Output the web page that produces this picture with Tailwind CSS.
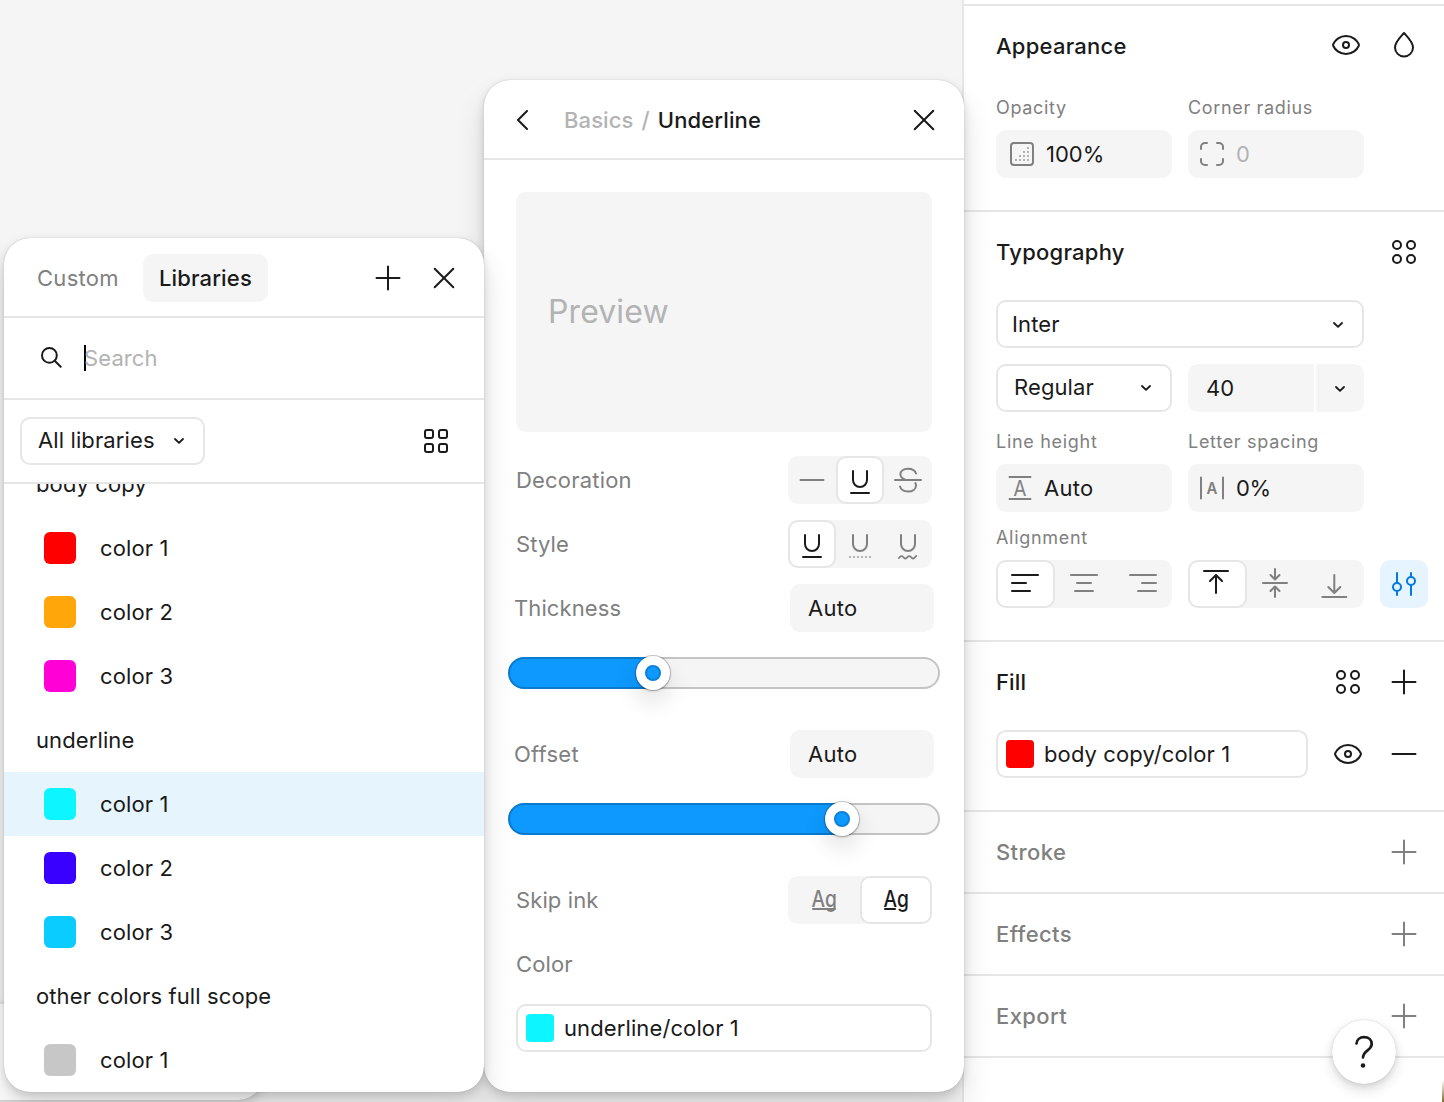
<!DOCTYPE html>
<html lang="en">
<head>
    <meta charset="UTF-8">
    <meta name="viewport" content="width=device-width, initial-scale=1.0">
    <title>Type settings</title>
    <script src="https://cdn.jsdelivr.net/npm/@tailwindcss/browser@4"></script>
    <style>
        body {
            font-family: 'Inter', sans-serif;
        }
        /* Shared outline style for the icons */
        svg {
            fill: none;
            stroke: currentColor;
            stroke-width: 2;
            stroke-linecap: round;
            stroke-linejoin: round;
            flex-shrink: 0;
        }
        svg text {
            fill: currentColor;
            stroke: none;
        }
    </style>
</head>
<body class="relative flex w-[1444px] h-[1102px] overflow-hidden bg-[#f5f5f5] text-[22px] leading-8 tracking-[0.11px] text-[#1a1a1a]">

<!-- Icon sprite -->
<svg class="hidden">
    <symbol id="plus" viewBox="0 0 48 48"><path d="M24 12.5v23M12.5 24h23"/></symbol>
    <symbol id="minus" viewBox="0 0 48 48"><path d="M12.5 24h23"/></symbol>
    <symbol id="close" viewBox="0 0 48 48"><path d="M14.700 14.700l18.600 18.600M33.300 14.700L14.700 33.300"/></symbol>
    <symbol id="chevron" viewBox="0 0 16 16"><path stroke-width="1.800" d="M4 7l4 3.900L12 7"/></symbol>
    <symbol id="eye" viewBox="0 0 48 48"><path d="M24 15c6.500 0 11 4.300 12.700 8a2.300 2.300 0 0 1 0 2C35 28.700 30.500 33 24 33s-11-4.300-12.700-8a2.300 2.300 0 0 1 0-2C13 19.300 17.500 15 24 15z"/><circle cx="24" cy="24" r="3"/></symbol>
    <symbol id="styles" viewBox="0 0 48 48"><circle cx="17" cy="17" r="4"/><circle cx="31" cy="17" r="4"/><circle cx="17" cy="31" r="4"/><circle cx="31" cy="31" r="4"/></symbol>
    <symbol id="underline" viewBox="0 0 48 48"><path d="M17 15v9a7 7 0 0 0 14 0v-9"/></symbol>
</svg>

<!-- Canvas -->
<main class="flex-1"></main>

<!-- Properties sidebar -->
<aside class="w-[482px] border-l-2 border-[#e6e6e6] bg-white">
    <div class="h-1.5 border-b-2 border-[#e6e6e6]"></div>

    <section class="border-b-2 border-[#e6e6e6] pl-8 pr-4 pb-8">
        <div class="flex h-20 items-center">
            <h2 class="flex-1 font-medium tracking-[0.25px]">Appearance</h2>
            <svg class="size-12 mr-2.5 -mt-0.5"><use href="#eye"/></svg>
            <svg class="size-12" viewBox="0 0 48 48"><path d="M24 11c-3.500 4-9 9-9 14.500a9 9 0 0 0 18 0C33 20 27.500 15 24 11z"/></svg>
        </div>
        <div class="grid w-[368px] grid-cols-2 gap-x-4">
            <div class="flex h-11 items-center text-[18px] tracking-[0.66px] text-[#808080]">Opacity</div>
            <div class="flex h-11 items-center text-[18px] tracking-[0.66px] text-[#808080]">Corner radius</div>
            <div class="flex h-12 items-center rounded-[10px] bg-[#f5f5f5] pl-3.5">
                <svg class="size-6 text-[#808080]" viewBox="0 0 24 24">
                    <rect x="1" y="1" width="22" height="22" rx="3"/>
                    <g stroke="none" fill="#b3b3b3">
                        <rect x="17" y="5" width="2" height="2"/>
                        <rect x="13" y="9" width="2" height="2"/><rect x="17" y="9" width="2" height="2"/>
                        <rect x="9" y="13" width="2" height="2"/><rect x="13" y="13" width="2" height="2"/><rect x="17" y="13" width="2" height="2"/>
                        <rect x="5" y="17" width="2" height="2"/><rect x="9" y="17" width="2" height="2"/><rect x="13" y="17" width="2" height="2"/><rect x="17" y="17" width="2" height="2"/>
                    </g>
                </svg>
                <span class="ml-3 tracking-normal">100%</span>
            </div>
            <div class="flex h-12 items-center rounded-[10px] bg-[#f5f5f5] pl-3">
                <svg class="size-6 text-[#808080]" viewBox="0 0 24 24"><path d="M1 7V5a4 4 0 0 1 4-4h2M17 1h2a4 4 0 0 1 4 4v2M23 17v2a4 4 0 0 1-4 4h-2M7 23H5a4 4 0 0 1-4-4v-2"/></svg>
                <span class="ml-3 text-[#b3b3b3]">0</span>
            </div>
        </div>
    </section>

    <section class="border-b-2 border-[#e6e6e6] pl-8 pr-4 pb-8">
        <div class="flex h-20 items-center">
            <h2 class="flex-1 font-medium tracking-[0.25px]">Typography</h2>
            <svg class="size-12"><use href="#styles"/></svg>
        </div>
        <div class="mt-2 flex h-12 w-[368px] items-center justify-between rounded-[10px] border-2 border-[#e6e6e6] pl-3.5 pr-4">
            Inter
            <svg class="size-4"><use href="#chevron"/></svg>
        </div>
        <div class="mt-4 grid w-[368px] grid-cols-2 gap-x-4">
            <div class="flex h-12 items-center justify-between rounded-[10px] border-2 border-[#e6e6e6] pl-4 pr-4 pb-0.5">
                Regular
                <svg class="size-4"><use href="#chevron"/></svg>
            </div>
            <div class="flex h-12 gap-0.5 overflow-hidden rounded-[10px]">
                <div class="flex flex-1 items-center bg-[#f5f5f5] pl-[18px]">40</div>
                <div class="flex w-12 items-center justify-center bg-[#f5f5f5]"><svg class="size-4"><use href="#chevron"/></svg></div>
            </div>
            <div class="mt-2 flex h-11 items-center text-[18px] tracking-[0.7px] text-[#808080]">Line height</div>
            <div class="mt-2 flex h-11 items-center text-[18px] tracking-[0.7px] text-[#808080]">Letter spacing</div>
            <div class="flex h-12 items-center rounded-[10px] bg-[#f5f5f5] pl-3">
                <svg class="size-6 text-[#808080]" viewBox="0 0 24 24"><path d="M1.500 1h21M1.500 23h21"/><text x="12" y="20" font-size="22" text-anchor="middle" textLength="13" lengthAdjust="spacingAndGlyphs">A</text></svg>
                <span class="ml-3 tracking-[0.25px]">Auto</span>
            </div>
            <div class="flex h-12 items-center rounded-[10px] bg-[#f5f5f5] pl-3">
                <svg class="size-6 text-[#808080]" viewBox="0 0 24 24"><path d="M1 1.500v21M23 1.500v21"/><text x="12" y="18" font-size="16.500" font-weight="600" text-anchor="middle" textLength="11" lengthAdjust="spacingAndGlyphs">A</text></svg>
                <span class="ml-3 tracking-[-0.5px]">0%</span>
            </div>
        </div>
        <div class="mt-1 flex h-11 items-center text-[18px] tracking-[0.7px] text-[#808080]">Alignment</div>
        <div class="flex gap-4 text-[#808080]">
            <div class="grid h-12 w-44 grid-cols-3 grid-rows-[48px] rounded-[10px] bg-[#f5f5f5]">
                <div class="flex items-center justify-center rounded-[10px] border-2 border-[#e6e6e6] bg-white text-[#1a1a1a]">
                    <svg class="size-12" viewBox="0 0 48 48"><path d="M11 15h26M11 23h14M11 31h18"/></svg>
                </div>
                <div class="flex items-center justify-center">
                    <svg class="size-12" viewBox="0 0 48 48"><path d="M11 15h26M17 23h14M15 31h18"/></svg>
                </div>
                <div class="flex items-center justify-center">
                    <svg class="size-12" viewBox="0 0 48 48"><path d="M11 15h26M23 23h14M19 31h18"/></svg>
                </div>
            </div>
            <div class="grid h-12 w-44 grid-cols-3 grid-rows-[48px] rounded-[10px] bg-[#f5f5f5]">
                <div class="flex items-center justify-center rounded-[10px] border-2 border-[#e6e6e6] bg-white text-[#1a1a1a]">
                    <svg class="size-12" viewBox="0 0 48 48"><path d="M11 11h24M23 33V15M17 21l6-6 6 6"/></svg>
                </div>
                <div class="flex items-center justify-center">
                    <svg class="size-12" viewBox="0 0 48 48"><path d="M11 23h24M23 9v10M18.500 15l4.500 4.500 4.500-4.500M23 37V27M18.500 31l4.500-4.500 4.500 4.500"/></svg>
                </div>
                <div class="flex items-center justify-center">
                    <svg class="size-12" viewBox="0 0 48 48"><path d="M11.300 37h24M23.300 15v18M17.300 27l6 6 6-6"/></svg>
                </div>
            </div>
            <div class="flex size-12 items-center justify-center rounded-[10px] bg-[#e5f4ff] text-[#007be5]">
                <svg class="size-12" viewBox="0 0 48 48"><path d="M17 13v9.500M17 31.500V35M31 13v4M31 25.500V35"/><circle cx="17" cy="27" r="4"/><circle cx="31" cy="21" r="4"/></svg>
            </div>
        </div>
    </section>

    <section class="border-b-2 border-[#e6e6e6] pl-8 pr-4 pb-8">
        <div class="flex h-20 items-center gap-2">
            <h2 class="flex-1 font-medium">Fill</h2>
            <svg class="size-12"><use href="#styles"/></svg>
            <svg class="size-12"><use href="#plus"/></svg>
        </div>
        <div class="mt-2 flex items-center gap-2">
            <div class="mr-2 flex h-12 flex-1 items-center rounded-[10px] border-2 border-[#e6e6e6] pl-2">
                <span class="size-7 rounded bg-[#ff0000]"></span>
                <span class="ml-2.5">body copy/color 1</span>
            </div>
            <svg class="size-12"><use href="#eye"/></svg>
            <svg class="size-12"><use href="#minus"/></svg>
        </div>
    </section>

    <section class="flex h-[82px] items-center justify-between border-b-2 border-[#e6e6e6] pl-8 pr-4 text-[#808080]">
        <h2 class="font-medium tracking-[0.4px]">Stroke</h2>
        <svg class="size-12"><use href="#plus"/></svg>
    </section>
    <section class="flex h-[82px] items-center justify-between border-b-2 border-[#e6e6e6] pl-8 pr-4 text-[#808080]">
        <h2 class="font-medium tracking-[0.4px]">Effects</h2>
        <svg class="size-12"><use href="#plus"/></svg>
    </section>
    <section class="flex h-[82px] items-center justify-between border-b-2 border-[#e6e6e6] pl-8 pr-4 text-[#808080]">
        <h2 class="font-medium tracking-[0.4px]">Export</h2>
        <svg class="size-12"><use href="#plus"/></svg>
    </section>
</aside>

<!-- Panel underneath, only its bottom edge shows -->
<div class="absolute -left-10 top-[1002px] h-[98px] w-[304px] rounded-b-[26px] border-t-2 border-[#e6e6e6] bg-white shadow-[0_0_1px_rgba(0,0,0,0.3),0_4px_10px_rgba(0,0,0,0.15)]"></div>

<!-- Underline settings -->
<div class="absolute left-[484px] top-20 h-[1012px] w-[480px] rounded-[26px] bg-white shadow-[0_0_1px_rgba(0,0,0,0.3),0_4px_10px_rgba(0,0,0,0.15),0_20px_32px_rgba(0,0,0,0.12)]">
    <div class="flex h-20 items-center border-b-2 border-[#e6e6e6] pt-0.5 pl-8 pr-4">
        <svg class="h-6 w-3" viewBox="0 0 12 24"><path d="M11 3L2 12l9 9"/></svg>
        <div class="ml-9 flex flex-1 gap-2 font-medium text-[#b3b3b3]">
            <span>Basics</span>
            <span>/</span>
            <span class="text-[#1a1a1a]">Underline</span>
        </div>
        <svg class="size-12"><use href="#close"/></svg>
    </div>
    <div class="flex flex-col px-8 pt-8 text-[#808080]">
        <div class="flex h-60 items-center rounded-[10px] bg-[#f5f5f5] pl-8 text-[32px] tracking-[0.1px] text-[#b3b3b3]">Preview</div>

        <div class="mt-6 flex items-center justify-between">
            <span class="tracking-[0.2px]">Decoration</span>
            <div class="flex h-12 rounded-[10px] bg-[#f5f5f5]">
                <svg class="size-12"><use href="#minus"/></svg>
                <div class="flex size-12 items-center justify-center rounded-[10px] border-2 border-[#e6e6e6] bg-white text-[#1a1a1a]">
                    <svg class="size-12" viewBox="0 0 48 48"><use href="#underline"/><path d="M15 37h18"/></svg>
                </div>
                <svg class="size-12" viewBox="0 0 48 48"><path d="M11 24h26M32 17.500c-1-3.200-4-4.800-8-4.800-4.500 0-7.600 2.300-7.600 5.600 0 2.700 2 4.400 5.200 5.700M16 30.500c1 3.200 4 5 8 5 4.700 0 8-2.400 8-6 0-1-.2-1.800-.6-2.500"/></svg>
            </div>
        </div>

        <div class="mt-4 flex items-center justify-between">
            Style
            <div class="flex h-12 rounded-[10px] bg-[#f5f5f5]">
                <div class="flex size-12 items-center justify-center rounded-[10px] border-2 border-[#e6e6e6] bg-white text-[#1a1a1a]">
                    <svg class="size-12" viewBox="0 0 48 48"><use href="#underline"/><path d="M15 37h18"/></svg>
                </div>
                <svg class="size-12" viewBox="0 0 48 48"><use href="#underline"/><path d="M13 37h22" stroke="#b3b3b3" stroke-linecap="butt" stroke-dasharray="2 2"/></svg>
                <svg class="size-12" viewBox="0 0 48 48"><use href="#underline"/><path stroke-width="1.800" d="M15 38l1.200-1.300a1.800 1.800 0 0 1 2.600 0l1.300 1.200a1.800 1.800 0 0 0 2.500 0l1.300-1.200a1.800 1.800 0 0 1 2.600 0l1.300 1.200a1.800 1.800 0 0 0 2.500 0l2-2"/></svg>
            </div>
        </div>

        <div class="mt-4 -mx-0.5 flex items-center justify-between">
            Thickness
            <div class="flex h-12 w-36 items-center rounded-[10px] bg-[#f5f5f5] pl-[18px] tracking-[0.25px] text-[#1a1a1a]">Auto</div>
        </div>
        <div class="relative mt-[25px] -mx-2 h-8 rounded-full bg-[#f5f5f5]">
            <div class="h-8 rounded-full bg-[#0d99ff]" style="width: 161px"></div>
            <div class="absolute inset-0 rounded-full border-2 border-black/20"></div>
            <div class="absolute -top-px size-[34px] rounded-full border-[9px] border-white bg-[#0d99ff] shadow-[0_0_0_1px_rgba(0,0,0,0.2),0_1px_3px_rgba(0,0,0,0.2),0_12px_24px_rgba(0,0,0,0.12)]" style="left: 128px">
                <div class="size-4 rounded-full border-2 border-black/15"></div>
            </div>
        </div>

        <div class="mt-[41px] -mx-0.5 flex items-center justify-between">
            <span class="tracking-[0.25px]">Offset</span>
            <div class="flex h-12 w-36 items-center rounded-[10px] bg-[#f5f5f5] pl-[18px] tracking-[0.25px] text-[#1a1a1a]">Auto</div>
        </div>
        <div class="relative mt-[25px] -mx-2 h-8 rounded-full bg-[#f5f5f5]">
            <div class="h-8 rounded-full bg-[#0d99ff]" style="width: 350px"></div>
            <div class="absolute inset-0 rounded-full border-2 border-black/20"></div>
            <div class="absolute -top-px size-[34px] rounded-full border-[9px] border-white bg-[#0d99ff] shadow-[0_0_0_1px_rgba(0,0,0,0.2),0_1px_3px_rgba(0,0,0,0.2),0_12px_24px_rgba(0,0,0,0.12)]" style="left: 317px">
                <div class="size-4 rounded-full border-2 border-black/15"></div>
            </div>
        </div>

        <div class="mt-[41px] flex items-center justify-between">
            Skip ink
            <div class="grid h-12 w-36 grid-cols-2 grid-rows-[48px] rounded-[10px] bg-[#f5f5f5]">
                <div class="flex items-center justify-center">
                    <svg class="size-12" viewBox="0 0 48 48"><text x="11.500" y="31" font-size="22.500" font-weight="500" textLength="25.500" lengthAdjust="spacingAndGlyphs">Ag</text><path d="M13 33h22"/></svg>
                </div>
                <div class="flex items-center justify-center rounded-[10px] border-2 border-[#e6e6e6] bg-white text-[#1a1a1a]">
                    <svg class="size-12" viewBox="0 0 48 48"><text x="11.500" y="31" font-size="22.500" font-weight="500" textLength="25.500" lengthAdjust="spacingAndGlyphs">Ag</text><path d="M13 33h10"/></svg>
                </div>
            </div>
        </div>

        <div class="mt-4 flex h-12 items-center">Color</div>
        <div class="mt-4 flex h-12 items-center rounded-[10px] border-2 border-[#e6e6e6] pl-2 text-[#1a1a1a]">
            <span class="size-7 rounded bg-[#0df6ff]"></span>
            <span class="ml-2.5">underline/color 1</span>
        </div>
    </div>
</div>

<!-- Color picker -->
<div class="absolute left-1 top-[238px] h-[854px] w-[480px] overflow-hidden rounded-[26px] bg-white shadow-[0_0_1px_rgba(0,0,0,0.3),0_4px_10px_rgba(0,0,0,0.15),0_20px_32px_rgba(0,0,0,0.12)]">
    <div class="flex h-20 items-center border-b-2 border-[#e6e6e6] pt-0.5 pl-[17px] pr-4">
        <div class="flex h-12 items-center px-4 text-[#808080] tracking-[0.3px]">Custom</div>
        <div class="ml-2 flex h-12 items-center rounded-[10px] bg-[#f5f5f5] px-4 font-medium tracking-[0.15px]">Libraries</div>
        <svg class="ml-auto size-12"><use href="#plus"/></svg>
        <svg class="ml-2 size-12"><use href="#close"/></svg>
    </div>
    <div class="flex h-[82px] items-center border-b-2 border-[#e6e6e6] pl-9">
        <svg class="size-6" viewBox="0 0 24 24"><circle cx="9.400" cy="9.400" r="7.400"/><path d="M14.700 14.700l6 6"/></svg>
        <span class="ml-5 h-[26px] w-0.5 bg-black"></span>
        <span class="-ml-0.5 text-[#b3b3b3]">Search</span>
    </div>
    <div class="flex h-[84px] items-center justify-between border-b-2 border-[#e6e6e6] pl-4 pr-6">
        <div class="flex h-12 w-[185px] items-center justify-between rounded-[10px] border-2 border-[#e6e6e6] px-4 pb-0.5">
            All libraries
            <svg class="size-4"><use href="#chevron"/></svg>
        </div>
        <svg class="size-12" viewBox="0 0 48 48"><rect x="13" y="13" width="8" height="8" rx="2"/><rect x="27" y="13" width="8" height="8" rx="2"/><rect x="13" y="27" width="8" height="8" rx="2"/><rect x="27" y="27" width="8" height="8" rx="2"/></svg>
    </div>
    <div class="h-[608px] overflow-hidden">
        <div class="-mt-8 flex h-16 items-center px-8">body copy</div>
        <div class="flex h-16 items-center gap-6 px-10"><span class="size-8 rounded-md bg-[#ff0000]"></span>color 1</div>
        <div class="flex h-16 items-center gap-6 px-10"><span class="size-8 rounded-md bg-[#ffa60a]"></span>color 2</div>
        <div class="flex h-16 items-center gap-6 px-10"><span class="size-8 rounded-md bg-[#ff00d6]"></span>color 3</div>
        <div class="flex h-16 items-center px-8">underline</div>
        <div class="flex h-16 items-center gap-6 bg-[#e5f4fd] px-10"><span class="size-8 rounded-md bg-[#0df6ff]"></span>color 1</div>
        <div class="flex h-16 items-center gap-6 px-10"><span class="size-8 rounded-md bg-[#3a00ff]"></span>color 2</div>
        <div class="flex h-16 items-center gap-6 px-10"><span class="size-8 rounded-md bg-[#0accff]"></span>color 3</div>
        <div class="flex h-16 items-center px-8">other colors full scope</div>
        <div class="flex h-16 items-center gap-6 px-10"><span class="size-8 rounded-md bg-[#c7c7c7]"></span>color 1</div>
    </div>
</div>

<!-- Help button -->
<div class="absolute bottom-[18px] right-12 size-16 rounded-full bg-white shadow-[0_0_1px_rgba(0,0,0,0.2),0_2px_6px_rgba(0,0,0,0.1),0_6px_14px_rgba(0,0,0,0.12)]">
    <svg class="size-16" viewBox="0 0 64 64"><path stroke-width="2.700" d="M24.500 23.500c.3-3.800 3.200-6.300 7.500-6.300 4.600 0 7.700 2.800 7.700 6.800 0 6.500-8.500 6.200-8.700 13.500"/><circle cx="31" cy="45.500" r="2.300" fill="currentColor" stroke="none"/></svg>
</div>
<div class="absolute bottom-0 right-0 h-[22px] w-0.5 bg-gradient-to-b from-transparent to-[#8a6a2a]"></div>
</body>
</html>
